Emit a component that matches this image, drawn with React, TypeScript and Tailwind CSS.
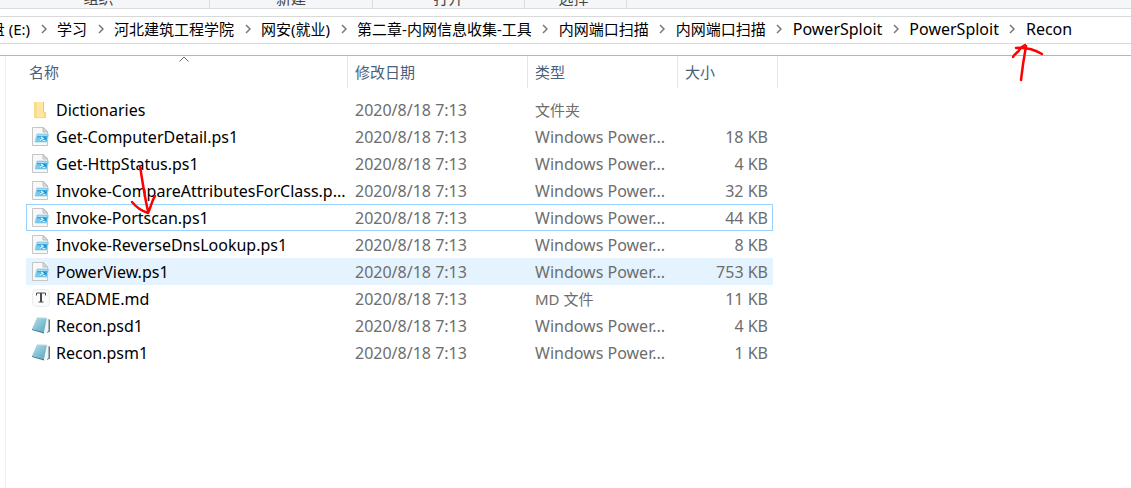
import { Fragment } from "react";

type Kind = "folder" | "script" | "markdown" | "module";
type Entry = { name: string; kind: Kind; type: string; size: string; state?: "focused" | "hovered" };

const DATE = "2020/8/18 7:13";
const PS = "Windows Power...";

const entries: Entry[] = [
  { name: "Dictionaries", kind: "folder", type: "文件夹", size: "" },
  { name: "Get-ComputerDetail.ps1", kind: "script", type: PS, size: "18 KB" },
  { name: "Get-HttpStatus.ps1", kind: "script", type: PS, size: "4 KB" },
  { name: "Invoke-CompareAttributesForClass.p...", kind: "script", type: PS, size: "32 KB" },
  { name: "Invoke-Portscan.ps1", kind: "script", type: PS, size: "44 KB", state: "focused" },
  { name: "Invoke-ReverseDnsLookup.ps1", kind: "script", type: PS, size: "8 KB" },
  { name: "PowerView.ps1", kind: "script", type: PS, size: "753 KB", state: "hovered" },
  { name: "README.md", kind: "markdown", type: "MD 文件", size: "11 KB" },
  { name: "Recon.psd1", kind: "module", type: PS, size: "4 KB" },
  { name: "Recon.psm1", kind: "module", type: PS, size: "1 KB" },
];

const crumbs = [
  "学习",
  "河北建筑工程学院",
  "网安(就业)",
  "第二章-内网信息收集-工具",
  "内网端口扫描",
  "内网端口扫描",
  "PowerSploit",
  "PowerSploit",
  "Recon",
];

// Chinese glyphs are set one pixel smaller than Latin ones so both look the same size.
const textSize = (text: string) => (/[\u4e00-\u9fff]/.test(text) ? "text-[15px]" : "text-base");

function FolderIcon() {
  return (
    <svg viewBox="0 0 20 20" className="size-5 shrink-0" aria-hidden="true">
      <path d="M3 2h10v10h2v6H4z" fill="#f7d67c" />
      <path d="M5 2h8v15H6z" fill="#ffe7a3" />
      <path d="M3 2l3 1.500V19l-3-1.500z" fill="#fbdc8c" />
      <path d="M12.500 2v10.500" stroke="#ecc765" />
    </svg>
  );
}

function ScriptIcon() {
  return (
    <svg viewBox="0 0 20 20" className="size-5 shrink-0" aria-hidden="true">
      <path d="M1.500 .5h11l4 4v14h-15z" fill="#f8f8f8" stroke="#c6c6c6" />
      <path d="M12 .5l4.500 4.500H12z" fill="#dcdcdc" stroke="#bcbcbc" />
      <path d="M6 7h11.500l-1.500 8H4z" fill="#3ba9dc" stroke="#a9d9ee" />
      <path d="M6.500 7.500h10.300l-.4 1.500H6z" fill="#a6dcf2" />
      <path d="M5.500 10.500h4l-2 4h-3z" fill="#7bcbed" />
      <path d="M10 10l2 1.500-3.500 2" fill="none" stroke="#e9f7fd" strokeWidth="1.200" />
      <path d="M11.500 13.500h3" stroke="#d2eef9" />
      <path d="M13 10l2 2" stroke="#1b80b9" />
    </svg>
  );
}

function MarkdownIcon() {
  return (
    <svg viewBox="0 0 20 20" className="size-5 shrink-0" aria-hidden="true">
      <rect x="1.500" y=".5" width="17" height="17" rx="4" fill="#fbfbfb" stroke="#ebebeb" />
      <path d="M5.500 6.500V4h9v2.500M7.500 13h5" fill="none" stroke="#4a4a4a" />
      <path d="M10 4v9" stroke="#4a4a4a" strokeWidth="2" />
    </svg>
  );
}

function ModuleIcon() {
  return (
    <svg viewBox="0 0 20 20" className="size-5 shrink-0" aria-hidden="true">
      <defs>
        <linearGradient id="cover" x1="0" y1="0" x2="1" y2="1">
          <stop offset="0" stopColor="#b5e2ec" />
          <stop offset="1" stopColor="#58a5bf" />
        </linearGradient>
      </defs>
      <path d="M16 3l3 .5v12l-3 1.500z" fill="#6d7779" />
      <path d="M16 2l1.500 1v12L14 18l-1-1.500z" fill="#f1f5f5" />
      <path d="M6 1.500L16 2l-3 14L1 13z" fill="url(#cover)" />
      <path d="M1 13l12 3v1.500L1 14z" fill="#3f7d92" />
      <path d="M6 1.500L16 2" stroke="#dcebed" />
    </svg>
  );
}

const icons = { folder: FolderIcon, script: ScriptIcon, markdown: MarkdownIcon, module: ModuleIcon };

function CrumbChevron() {
  return (
    <span className="flex w-[27px] shrink-0 justify-center">
      <svg viewBox="0 0 6 10" className="h-[10px] w-[6px]" aria-hidden="true">
        <path d="M1 1l4 4-4 4" fill="none" stroke="#777" strokeWidth="1.500" />
      </svg>
    </span>
  );
}

function Ribbon() {
  const group = "border-r border-[#dcdddf] pb-[2px]";
  return (
    <div className="flex h-[9px] items-end overflow-hidden border-b border-[#dadbdc] bg-[#f5f6f7] text-center text-[15px] leading-4 text-[#444]">
      <div className={`${group} w-[210px] pr-3`}>组织</div>
      <div className={`${group} w-[163px]`}>新建</div>
      <div className={`${group} w-[152px]`}>打开</div>
      <div className={`${group} w-[102px] pr-1`}>选择</div>
    </div>
  );
}

function AddressBar() {
  return (
    <nav
      aria-label="Address"
      className="mt-[7px] flex h-7 items-center overflow-hidden whitespace-nowrap border-y border-[#d9d9d9] pb-[2px] leading-5"
    >
      <a href="#drive" className="flex w-[30px] shrink-0 justify-end overflow-hidden text-[15px]">
        <span className="shrink-0">盘 (E:)</span>
      </a>
      {crumbs.map((label, i) => (
        <Fragment key={i}>
          <CrumbChevron />
          <a href={`#level-${i}`} className={`shrink-0 ${textSize(label)}`}>
            {label}
          </a>
        </Fragment>
      ))}
    </nav>
  );
}

function FileRow({ entry }: { entry: Entry }) {
  const Icon = icons[entry.kind];
  const cell =
    entry.state === "focused"
      ? "border-y border-[#99d1ff]"
      : entry.state === "hovered"
        ? "border-y border-[#e5f3ff] bg-[#e5f3ff]"
        : "border-y border-transparent";
  return (
    <tr className="h-[27px] text-[#6d6d6d]">
      <td className={`${cell} border-l p-0 pl-1 text-black`}>
        <span className="flex items-center gap-[5px]">
          <Icon />
          {entry.name}
        </span>
      </td>
      <td className={`${cell} p-0 pl-[7px]`}>{DATE}</td>
      <td className={`${cell} p-0 pl-[7px] ${textSize(entry.type)}`}>{entry.type}</td>
      <td className={`${cell} border-r p-0 pr-1 text-right`}>{entry.size}</td>
      <td className="p-0" />
    </tr>
  );
}

function FileList() {
  const head = "relative h-8 border-r border-[#e5e5e5] p-0 pl-[7px] text-left font-normal";
  return (
    <main className="ml-[5px] min-h-[432px] border-l border-[#f0f0f0] pl-5">
      <table className="w-[752px] table-fixed border-separate border-spacing-0 whitespace-nowrap text-base leading-5">
        <colgroup>
          <col className="w-[322px]" />
          <col className="w-[180px]" />
          <col className="w-[150px]" />
          <col className="w-[95px]" />
          <col className="w-[5px]" />
        </colgroup>
        <thead className="text-[15px] text-[#4c607a]">
          <tr>
            <th className={head} aria-sort="ascending">
              <svg viewBox="0 0 10 6" className="absolute left-[153px] top-0 h-[6px] w-[10px]" aria-hidden="true">
                <path d="M.5 5.500L5 1l4.500 4.500" fill="none" stroke="#666" />
              </svg>
              <span className="-ml-1">名称</span>
            </th>
            <th className={head}>修改日期</th>
            <th className={head}>类型</th>
            <th className={head} colSpan={2}>
              大小
            </th>
          </tr>
        </thead>
        <tbody>
          <tr className="h-2" aria-hidden="true">
            <td colSpan={5} className="p-0" />
          </tr>
          {entries.map((entry) => (
            <FileRow key={entry.name} entry={entry} />
          ))}
        </tbody>
      </table>
    </main>
  );
}

export default function App() {
  return (
    <div className="relative overflow-hidden bg-white font-['Noto_Sans','Noto_Sans_CJK_SC',sans-serif] text-black">
      <Ribbon />
      <AddressBar />
      <div className="mt-[11px] border-t border-[#b5b5b5]">
        <FileList />
      </div>
      <svg viewBox="0 0 34 40" className="absolute left-[1011px] top-[43px] h-10 w-[34px]" aria-hidden="true">
        <path
          d="M10 37C11 28 13 14 15 3M2 14C4 10 7 10 9 6C10 4 12 3 14 2M5 5C15 4 24 7 31 11"
          fill="none"
          stroke="#ff0000"
          strokeWidth="2.500"
          strokeLinecap="round"
        />
      </svg>
      <svg viewBox="0 0 30 52" className="absolute left-[130px] top-[163px] h-[52px] w-[30px]" aria-hidden="true">
        <path
          d="M10 3C12 16 15 36 18 48M2 39C6 44 12 48 18 50C21 45 21 39 25 33"
          fill="none"
          stroke="#ff0000"
          strokeWidth="2.500"
          strokeLinecap="round"
          strokeLinejoin="round"
        />
      </svg>
    </div>
  );
}
